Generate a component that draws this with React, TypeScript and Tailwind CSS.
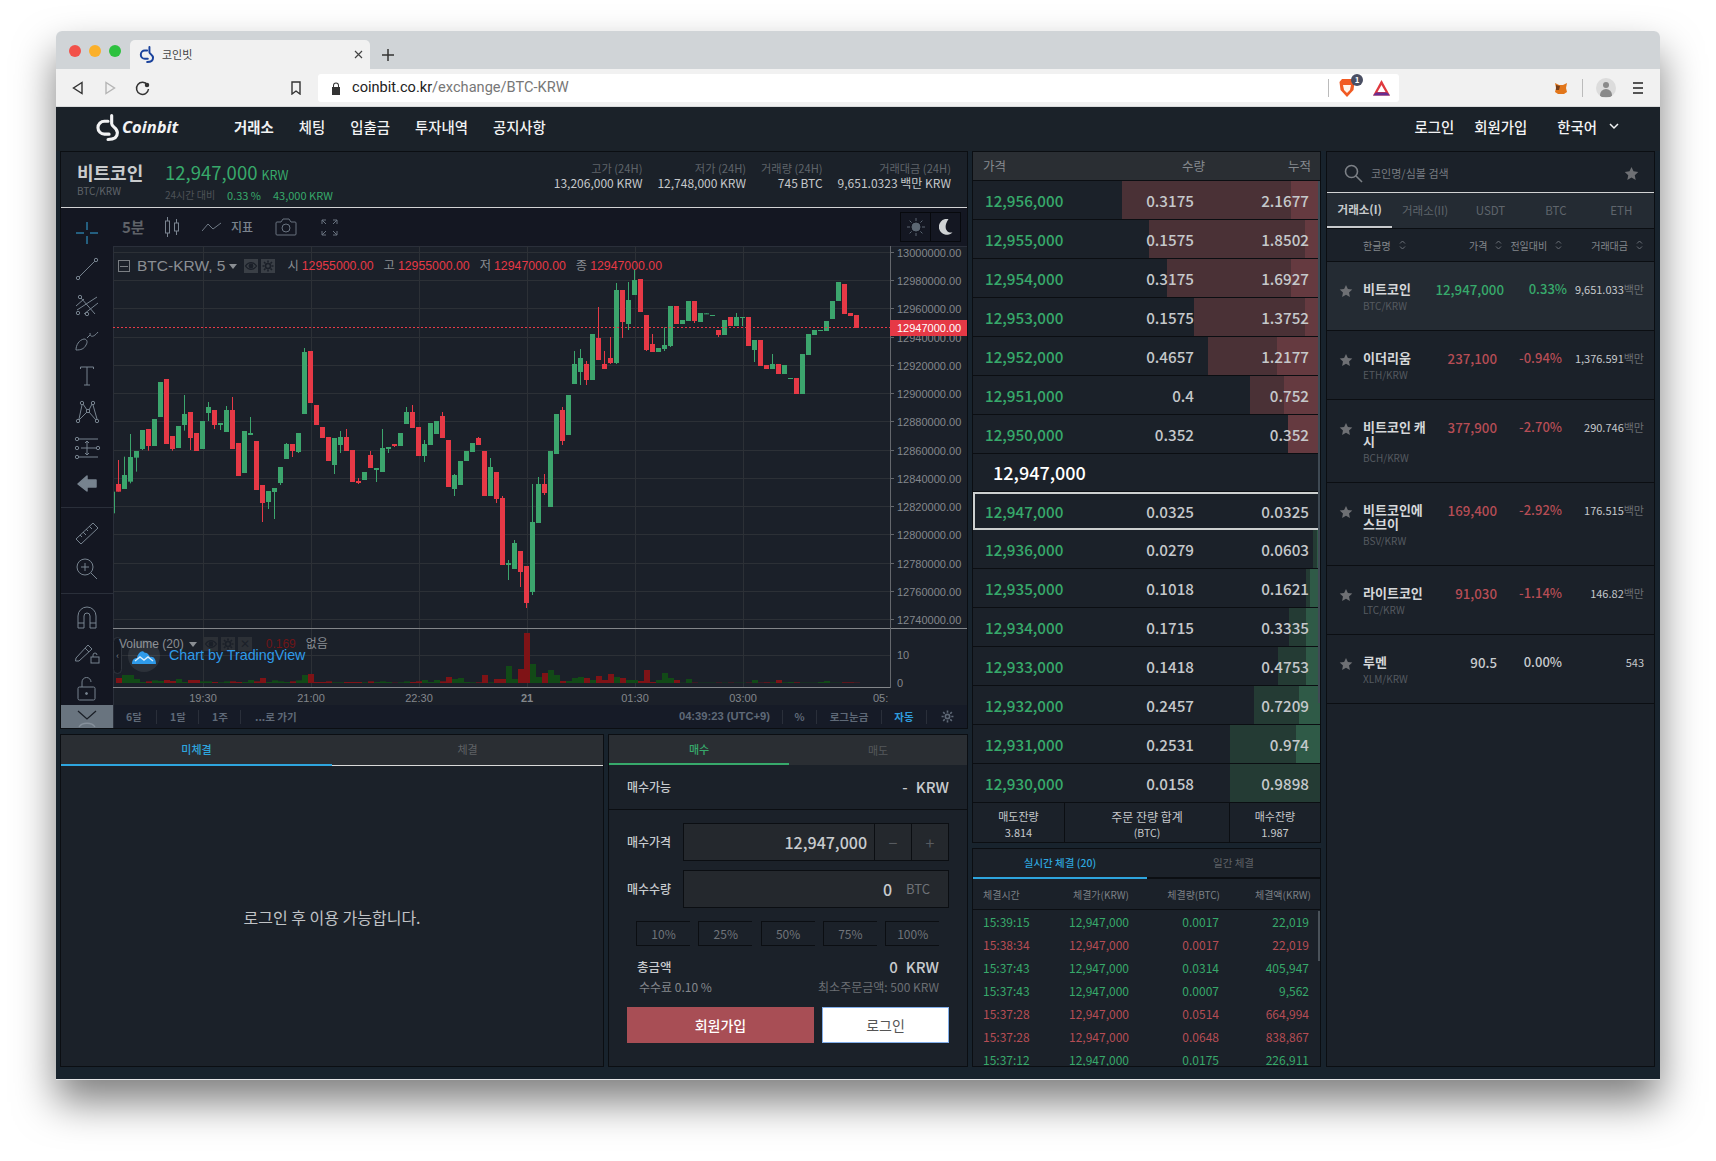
import React from 'react';

const GREEN = '#37a96b';
const RED = '#b64d55';

// [up, wickTop, bodyTop, bodyBottom, wickBottom] read off the chart, y in 3x pixels from y=220
const CANDLES: number[][] = [
  [0,720,792,815,815],[1,710,765,807,807],[1,642,711,785,790],[1,693,693,713,755],[1,630,630,687,690],[0,627,627,678,692],[1,597,597,678,678],[1,486,486,591,591],
  [0,477,477,672,672],[0,648,648,687,692],[1,618,618,684,684],[1,525,582,615,632],[0,576,576,654,690],[0,639,639,693,693],[1,603,603,687,687],[1,546,561,579,603],
  [0,570,570,615,627],[1,609,609,615,630],[1,558,570,636,636],[0,531,570,687,687],[0,669,669,768,768],[1,633,633,759,759],[1,591,639,645,645],[0,663,663,810,810],
  [0,795,795,849,906],[1,813,813,846,867],[1,804,804,816,897],[1,741,741,789,795],[1,669,672,717,717],[0,672,672,693,711],[1,639,639,696,699],[1,384,396,582,582],
  [0,393,393,549,549],[0,555,555,615,615],[0,621,621,654,654],[0,651,651,723,723],[1,654,654,735,762],[1,633,651,675,699],[0,627,651,693,693],[0,690,690,786,786],
  [0,774,783,789,792],[1,756,756,780,780],[0,693,705,744,744],[1,744,744,750,786],[1,627,684,756,756],[1,681,681,687,699],[0,672,672,678,681],[1,639,639,678,678],
  [1,561,576,612,612],[0,555,576,624,624],[0,621,621,708,708],[1,660,672,708,726],[1,609,609,675,675],[1,603,603,642,642],[0,576,588,654,654],[0,660,660,801,801],
  [1,762,765,807,828],[1,723,723,795,795],[1,693,693,723,723],[1,669,669,696,696],[0,651,654,675,675],[0,693,693,828,828],[1,714,741,828,828],[0,756,756,837,849],
  [0,828,834,1035,1035],[1,1020,1029,1035,1080],[1,960,969,1047,1047],[0,993,993,1056,1101],[0,1038,1038,1149,1164],[1,792,906,1116,1125],[1,771,792,909,909],[0,762,792,819,825],
  [1,693,693,861,861],[1,582,582,702,702],[0,561,570,663,675],[1,525,525,645,645],[1,393,432,492,492],[1,387,414,456,495],[0,423,432,480,495],[1,342,342,480,480],
  [0,261,354,420,420],[0,393,432,447,447],[0,351,414,429,432],[1,189,210,429,432],[0,210,210,306,354],[1,186,240,312,330],[1,150,180,225,225],[0,177,177,276,276],
  [0,285,285,390,393],[0,342,372,396,396],[1,384,384,396,396],[1,322,375,387,393],[1,258,258,378,381],[0,258,258,312,312],[1,300,300,312,312],[1,243,243,303,303],
  [0,243,243,303,309],[1,279,279,306,306],[1,280,280,282,282],[1,285,285,287,287],[0,330,330,345,351],[1,300,300,345,345],[0,291,291,318,318],[1,279,291,318,318],
  [1,291,291,293,318],[0,291,291,378,378],[1,360,360,390,426],[0,360,360,438,438],[0,435,435,447,447],[1,402,432,447,447],[0,432,432,462,462],[1,435,435,462,462],
  [1,474,474,476,476],[0,474,474,522,522],[1,402,402,522,522],[1,342,342,405,405],[1,330,330,345,345],[1,330,330,332,332],[1,303,303,333,333],[1,243,243,297,297],
  [1,186,186,243,243],[0,192,192,282,282],[0,279,279,288,288],[0,285,285,324,324],
];

const VOLUME = [
  1374,1365,1365,1377,1386,1384,1381,1383,1380,1383,1377,1386,1380,1380,1384,1384,1386,1387,1384,1384,1386,1386,1380,1384,1374,1386,1381,1384,1386,1384,1381,1365,
  1362,1386,1386,1384,1387,1387,1386,1386,1386,1387,1384,1386,1384,1386,1388,1387,1384,1386,1384,1380,1386,1380,1384,1371,1377,1374,1386,1387,1387,1365,1387,1377,
  1377,1338,1377,1347,1239,1332,1371,1359,1350,1365,1383,1383,1374,1371,1374,1380,1368,1380,1362,1371,1374,1380,1380,1383,1350,1386,1380,1359,1374,1380,1388,1377,
  1388,1388,1388,1388,1388,1388,1388,1388,1388,1388,1380,1388,1387,1387,1380,1387,1386,1387,1388,1388,1388,1386,1383,1388,1388,1387,1387,1388,
];

const GRID_Y = [252, 280, 308, 337, 365, 393, 421, 450, 478, 506, 534, 563, 591, 619];
const GRID_X = [203, 311, 419, 527, 635, 743];
const zy = (v: number) => 220 + v / 3;

const ASKS = [
  ['12,956,000', '0.3175', '2.1677', 198, 29],
  ['12,955,000', '0.1575', '1.8502', 171, 15],
  ['12,954,000', '0.3175', '1.6927', 153, 29],
  ['12,953,000', '0.1575', '1.3752', 126, 15],
  ['12,952,000', '0.4657', '1.2177', 112, 43],
  ['12,951,000', '0.4', '0.752', 70, 36],
  ['12,950,000', '0.352', '0.352', 32, 32],
] as const;

const BIDS = [
  ['12,936,000', '0.0279', '0.0603', 7, 3],
  ['12,935,000', '0.1018', '0.1621', 14, 10],
  ['12,934,000', '0.1715', '0.3335', 31, 14],
  ['12,933,000', '0.1418', '0.4753', 42, 14],
  ['12,932,000', '0.2457', '0.7209', 66, 21],
  ['12,931,000', '0.2531', '0.974', 90, 24],
  ['12,930,000', '0.0158', '0.9898', 90, 0],
] as const;

const TRADES = [
  ['15:39:15', '0.0017', '22,019', true],
  ['15:38:34', '0.0017', '22,019', false],
  ['15:37:43', '0.0314', '405,947', true],
  ['15:37:43', '0.0007', '9,562', true],
  ['15:37:28', '0.0514', '664,994', false],
  ['15:37:28', '0.0648', '838,867', false],
  ['15:37:12', '0.0175', '226,911', true],
] as const;

const COINS = [
  { name: '비트코인', sym: 'BTC/KRW', price: '12,947,000', pct: '0.33%', vol: '9,651.033', unit: '백만', color: GREEN, first: true },
  { name: '이더리움', sym: 'ETH/KRW', price: '237,100', pct: '-0.94%', vol: '1,376.591', unit: '백만', color: RED },
  { name: '비트코인 캐시', sym: 'BCH/KRW', price: '377,900', pct: '-2.70%', vol: '290.746', unit: '백만', color: RED },
  { name: '비트코인에스브이', sym: 'BSV/KRW', price: '169,400', pct: '-2.92%', vol: '176.515', unit: '백만', color: RED },
  { name: '라이트코인', sym: 'LTC/KRW', price: '91,030', pct: '-1.14%', vol: '146.82', unit: '백만', color: RED },
  { name: '루멘', sym: 'XLM/KRW', price: '90.5', pct: '0.00%', vol: '543', unit: '', color: '#c8cbce' },
];

const Logo = ({ color, className }: { color: string; className: string }) => (
  <svg viewBox="0 0 24 26" className={className} fill="none" stroke={color} strokeWidth="3" strokeLinecap="round">
    <path d="M13 7H9.500a6.200 6.200 0 0 0 0 12.400H14" />
    <path d="M16.500 1.500V9.500c0 3 5.500 3.600 5.500 8.500 0 4.400-3.800 6.500-9 6.500" />
  </svg>
);

const Star = ({ size = 14 }: { size?: number }) => (
  <svg width={size} height={size} viewBox="0 0 24 24" fill="#6e7074">
    <path d="M12 1.500l3.200 7 7.600.9-5.600 5.200 1.500 7.600L12 18.400l-6.700 3.800 1.500-7.600L1.200 9.400l7.600-.9z" />
  </svg>
);

const Sort = () => (
  <svg width="7" height="10" viewBox="0 0 7 10" fill="none" stroke="#6b7078" strokeWidth="1">
    <path d="M1 3.500L3.500 1 6 3.500M1 6.500L3.500 9 6 6.500" />
  </svg>
);

const Eye = () => (
  <svg width="14" height="14" viewBox="0 0 14 14" fill="none" stroke="#1b2029" strokeWidth="1.300">
    <path d="M1.500 7c3-4.500 8-4.500 11 0-3 4.500-8 4.500-11 0z" />
    <circle cx="7" cy="7" r="1.800" fill="#1b2029" />
  </svg>
);

const Gear = () => (
  <svg width="14" height="14" viewBox="0 0 14 14" fill="none" stroke="#1b2029" strokeWidth="1.600">
    <circle cx="7" cy="7" r="2.500" />
    <path d="M7 1.500v2M7 10.500v2M1.500 7h2M10.500 7h2M3 3l1.500 1.500M9.500 9.500L11 11M3 11l1.500-1.500M9.500 4.500L11 3" />
  </svg>
);

const Caret = () => (
  <svg width="8" height="5" viewBox="0 0 8 5" fill="#8a8e93"><path d="M0 0h8L4 5z" /></svg>
);

// left drawing tools of the chart, all on a 28x28 box
const TOOLS: React.ReactNode[] = [
  <g><circle cx="5" cy="23" r="1.700" /><circle cx="23" cy="5" r="1.700" /><path d="M6.200 21.800L21.800 6.200" /></g>,
  <g><path d="M4 20L24 7M11 24L25 13M8 8l14 16M3 16l8-7" /><circle cx="5" cy="23" r="1.700" /><circle cx="14" cy="24" r="1.700" /><circle cx="7" cy="7" r="1.700" /></g>,
  <g><path d="M3 24c0-5 3-10 8-11 3 0 4 3 2 6-2 4-5 5-10 5zM14 12l3-3M17 7c0 5 4 4 8-1" /></g>,
  <g><path d="M7.500 5h13M7.500 5v2M20.500 5v2M14 5v18M11 23h6" /></g>,
  <g><circle cx="5" cy="23" r="1.700" /><circle cx="9" cy="5" r="1.700" /><circle cx="20" cy="5" r="1.700" /><circle cx="24" cy="23" r="1.700" /><circle cx="15" cy="13" r="1.700" /><path d="M6 21L9 7M10 6l4 6M16 12l3-6M20 7l4 14M6 22l8-8M16 14l7 8" /></g>,
  <g><path d="M6 5h19M8 14h15M6 23h19M14 7v14M12 9l2-2 2 2M12 19l2 2 2-2" /><circle cx="4" cy="5" r="1.700" /><circle cx="4" cy="14" r="1.700" /><circle cx="25" cy="14" r="1.700" /><circle cx="4" cy="23" r="1.700" /></g>,
  <path d="M5 15l9-8v4h9v7h-9v4z" fill="#77838f" stroke="#77838f" strokeWidth="1.500" strokeLinejoin="round" />,
];

const TOOLS2: React.ReactNode[] = [
  <g><path d="M3 20L20 4l5 5L8 25zM7 16l2 2M10 13l3 3M13 10l2 2M16 7l3 3" /></g>,
  <g><circle cx="12" cy="12" r="8" /><path d="M18 18l6 6M12 8v8M8 12h8" /></g>,
];

const TOOLS3: React.ReactNode[] = [
  <g><path d="M5 24V12a9 9 0 0 1 18 0v12h-6V12a3 3 0 0 0-6 0v12zM5 19h6M17 19h6" /></g>,
  <g><path d="M3 19L15 6l4 4L6 22l-3.500 0zM12 9l4 4" /><rect x="18" y="18" width="8" height="6" /><path d="M20 18v-2a2 2 0 0 1 4 0" /></g>,
  <g><rect x="5" y="13" width="17" height="13" rx="1.500" /><path d="M9 13V8a4.500 4.500 0 0 1 9 0" /><circle cx="13.500" cy="19.500" r="1" fill="#77838f" /></g>,
];

const Tool = ({ children, h = 'h-[36px]' }: { children: React.ReactNode; h?: string }) => (
  <div className={`${h} flex items-center justify-center`}>
    <svg width="28" height="28" viewBox="0 0 28 28" fill="none" stroke="#77838f" strokeWidth="1">
      {children}
    </svg>
  </div>
);

const LeftToolbar = () => (
  <div className="flex w-[52px] shrink-0 flex-col bg-[#141722] pt-[7px]">
    <div className="flex h-[36px] items-center justify-center">
      <svg width="24" height="24" viewBox="0 0 24 24" fill="none" strokeWidth="1" stroke="#35a7dc">
        <path d="M1 12h8M15 12h8M12 1v8M12 15v8" />
      </svg>
    </div>
    {TOOLS.map((t, i) => <Tool key={i}>{t}</Tool>)}
    <div className="my-[6px] h-px bg-[#2a2f3a]" />
    {TOOLS2.map((t, i) => <Tool key={i} h={i === 0 ? 'h-[37px]' : 'h-[36px]'}>{t}</Tool>)}
    <div className="my-[6px] h-px bg-[#2a2f3a]" />
    {TOOLS3.map((t, i) => <Tool key={i} h={i === 2 ? 'h-[34px]' : 'h-[36px]'}>{t}</Tool>)}
    <div className="mt-auto flex h-[23px] items-center justify-center overflow-hidden bg-[#69747f]">
      <svg width="24" height="24" viewBox="0 0 24 24" fill="none" stroke="#1a1f27" strokeWidth="1.300">
        <path d="M3 6l9 8 9-8" />
        <path d="M4 22c3-5 13-5 16 0" stroke="#86909b" />
      </svg>
    </div>
  </div>
);

const TopToolbar = () => (
  <div className="flex h-[38px] shrink-0 items-center bg-[#141722] pl-[9px] pr-[6px]">
    <span className="w-[42px] text-[15px] font-bold text-[#5f6268]">5분</span>
    <svg width="16" height="20" viewBox="0 0 16 20" fill="none" stroke="#7a8490" strokeWidth="1">
      <rect x="1.500" y="4" width="4" height="12" />
      <path d="M3.500 0v4M3.500 16v4M12.500 2v4M12.500 14v4" />
      <rect x="10.500" y="6" width="4" height="8" />
    </svg>
    <svg width="20" height="10" viewBox="0 0 20 10" fill="none" stroke="#6f7985" strokeWidth="1" className="ml-[22px]">
      <path d="M0 9l6-7 5 5 8-6" />
    </svg>
    <span className="ml-[9px] text-[12px] font-medium text-[#7a838d]">지표</span>
    <svg width="22" height="18" viewBox="0 0 22 18" fill="none" stroke="#68727f" strokeWidth="1" className="ml-[22px]">
      <path d="M2 4h4l2-3h6l2 3h4a1 1 0 0 1 1 1v11a1 1 0 0 1-1 1H2a1 1 0 0 1-1-1V5a1 1 0 0 1 1-1z" />
      <circle cx="11" cy="10" r="4" />
    </svg>
    <svg width="17" height="17" viewBox="0 0 17 17" fill="none" stroke="#68727f" strokeWidth="1" className="ml-[24px]">
      <path d="M1 5V1h4M1 1l4 4M16 5V1h-4M16 1l-4 4M1 12v4h4M1 16l4-4M16 12v4h-4M16 16l-4-4" />
    </svg>
    <div className="ml-auto flex h-[30px] border border-[#07090d]">
      <div className="flex w-[30px] items-center justify-center border-r border-[#07090d]">
        <svg width="18" height="18" viewBox="0 0 18 18" stroke="#5c6773" strokeWidth="1" fill="#5c6773">
          <circle cx="9" cy="9" r="4" />
          <path d="M9 0v3M9 15v3M0 9h3M15 9h3M2.600 2.600l2 2M13.400 13.400l2 2M2.600 15.400l2-2M13.400 4.600l2-2" />
        </svg>
      </div>
      <div className="flex w-[29px] items-center justify-center">
        <svg width="14" height="16" viewBox="0 0 14 16" fill="#cfd2d4">
          <path d="M9.500 0a8 8 0 1 0 4 13.500C7 14.500 4 8 9.500 0z" />
        </svg>
      </div>
    </div>
  </div>
);

const ChartCanvas = () => (
  <div className="relative h-[459px] shrink-0 bg-[#1b2029]">
    <svg viewBox="113 246 854 459" width="854" height="459" className="absolute left-0 top-0 font-['Liberation_Sans','Noto_Sans_CJK_KR',sans-serif]">
      <line x1="113" x2="967" y1="246.500" y2="246.500" stroke="#2a2f3a" />
      <line x1="113.500" x2="113.500" y1="246" y2="705" stroke="#2a2f3a" />
      {GRID_Y.map((y) => <line key={y} x1="113" x2="890" y1={y + 0.5} y2={y + 0.5} stroke="#2c3036" />)}
      <line x1="113" x2="890" y1="655.500" y2="655.500" stroke="#2c3036" />
      {GRID_X.map((x) => <line key={x} x1={x + 0.5} x2={x + 0.5} y1="246" y2="687" stroke="#2c3036" />)}
      {VOLUME.map((v, i) => (
        <rect key={i} x={116 + 6 * i} y={zy(v)} width="6" height={683 - zy(v)} fill={CANDLES[i][0] ? '#124a17' : '#7f1316'} />
      ))}
      <line x1="114.500" x2="114.500" y1={zy(815)} y2={zy(880)} stroke="#3ca56d" />
      {CANDLES.map(([up, wt, bt, bb, wb], i) => {
        const cx = 118.5 + 6 * i;
        const color = up ? '#3ca56d' : '#e63946';
        return (
          <g key={i}>
            <line x1={cx} x2={cx} y1={zy(wt)} y2={zy(wb)} stroke={color} />
            <rect x={cx - 2.5} y={zy(bt)} width="5" height={Math.max(1, (bb - bt) / 3)} fill={color} />
          </g>
        );
      })}
      <line x1="113" x2="890" y1="327.500" y2="327.500" stroke="#e63946" strokeDasharray="2 2" />
      <line x1="113" x2="967" y1="628.500" y2="628.500" stroke="#83868a" />
      <line x1="113" x2="890" y1="687.500" y2="687.500" stroke="#83868a" />
      <line x1="890.500" x2="890.500" y1="246" y2="688" stroke="#64676c" />
      {GRID_Y.map((y, i) => (
        <g key={y}>
          <line x1="890" x2="894" y1={y + 0.5} y2={y + 0.5} stroke="#64676c" />
          <text x="897" y={y + 4.5} fontSize="11" fill="#83878c">{13000000 - 20000 * i}.00</text>
        </g>
      ))}
      <rect x="890" y="320" width="77" height="16" fill="#e63946" />
      <text x="897" y="332" fontSize="11" fill="#ffffff">12947000.00</text>
      <text x="897" y="659" fontSize="11" fill="#83878c">10</text>
      <text x="897" y="687" fontSize="11" fill="#83878c">0</text>
      {[['19:30', 203], ['21:00', 311], ['22:30', 419], ['21', 527], ['01:30', 635], ['03:00', 743]].map(([t, x]) => (
        <text key={t} x={x} y="702" fontSize="11" textAnchor="middle" fill="#83878c" fontWeight={t === '21' ? 700 : 400}>{t}</text>
      ))}
      <text x="873" y="702" fontSize="11" fill="#83878c">05:</text>
    </svg>
    <div className="absolute left-[5px] top-[11px] flex items-center font-['Liberation_Sans','Noto_Sans_CJK_KR',sans-serif] text-[12.300px] leading-[18px] text-[#8a8e93]">
      <span className="flex h-[12px] w-[12px] items-center justify-center border border-[#7a7e83]"><span className="h-px w-[8px] bg-[#7a7e83]" /></span>
      <span className="ml-[7px] text-[15.500px]">BTC-KRW, 5</span>
      <span className="ml-[4px]"><Caret /></span>
      <span className="ml-[7px] bg-[#3a3f46]"><Eye /></span>
      <span className="ml-[3px] bg-[#3a3f46]"><Gear /></span>
      <span className="ml-[12px]">시</span>
      <span className="ml-[3px] text-[#e63946]">12955000.00</span>
      <span className="ml-[10px]">고</span>
      <span className="ml-[3px] text-[#e63946]">12955000.00</span>
      <span className="ml-[10px]">저</span>
      <span className="ml-[3px] text-[#e63946]">12947000.00</span>
      <span className="ml-[10px]">종</span>
      <span className="ml-[3px] text-[#e63946]">12947000.00</span>
    </div>
    <div className="absolute left-0 top-[391px] flex h-[37px] w-[9px] items-center justify-center rounded-[5px] border border-[#30353e] bg-[#151922] text-[9px] text-[#7e848c]">‹</div>
    <div className="absolute left-[6px] top-[389px] flex items-center font-['Liberation_Sans','Noto_Sans_CJK_KR',sans-serif] text-[12px] leading-[18px] text-[#8a8e93]">
      <span>Volume (20)</span>
      <span className="ml-[5px]"><Caret /></span>
      <span className="ml-[7px] bg-[#2c3036]"><Eye /></span>
      <span className="ml-[3px] bg-[#2c3036]"><Gear /></span>
      <span className="ml-[3px] flex h-[14px] w-[14px] items-center justify-center bg-[#2c3036] text-[12px] text-[#1b2029]">✕</span>
      <span className="ml-[14px] text-[#6f1518]">0.169</span>
      <span className="ml-[10px]">없음</span>
    </div>
    <div className="absolute left-[15px] top-[394px] flex items-center">
      <span className="flex h-[32px] w-[32px] items-center justify-center rounded-full bg-[#ffffff14]">
        <svg width="24" height="15" viewBox="0 0 24 15" fill="#2f9bea">
          <path d="M0 15c0-4 2-6 5-6 1-5 5-9 8-5 2-1 4 2 5 4 4-1 6 3 6 7z" />
          <path d="M3 12l5-4 4 3 4-3 5 4" fill="none" stroke="#d8ecfb" strokeWidth="1.400" />
        </svg>
      </span>
      <span className="ml-[9px] font-['Liberation_Sans',sans-serif] text-[14.300px] text-[#2f9bea]">Chart by TradingView</span>
    </div>
  </div>
);

const ChartFooter = () => (
  <div className="flex h-[23px] items-center border-l border-[#2a2f3a] bg-[#161b27] font-['Noto_Sans_CJK_KR',sans-serif] text-[10.500px] font-bold text-[#5f6977]">
    <span className="w-[42px] pl-[12px]">6달</span>
    <span className="h-[14px] w-px bg-[#2a2f3a]" />
    <span className="w-[41px] pl-[13px]">1달</span>
    <span className="h-[14px] w-px bg-[#2a2f3a]" />
    <span className="w-[41px] pl-[13px]">1주</span>
    <span className="h-[14px] w-px bg-[#2a2f3a]" />
    <span className="pl-[14px]">...로 가기</span>
    <span className="ml-auto font-['Liberation_Sans',sans-serif] text-[11.200px]">04:39:23 (UTC+9)</span>
    <span className="ml-[12px] h-[14px] w-px bg-[#2a2f3a]" />
    <span className="w-[33px] text-center">%</span>
    <span className="h-[14px] w-px bg-[#2a2f3a]" />
    <span className="w-[64px] text-center">로그눈금</span>
    <span className="h-[14px] w-px bg-[#2a2f3a]" />
    <span className="w-[44px] text-center text-[#2f9bdc]">자동</span>
    <span className="h-[14px] w-px bg-[#2a2f3a]" />
    <span className="flex w-[40px] justify-center">
      <svg width="13" height="13" viewBox="0 0 24 24" fill="none" stroke="#5f6977" strokeWidth="3">
        <circle cx="12" cy="12" r="4" />
        <path d="M12 1v4M12 19v4M1 12h4M19 12h4M4 4l3 3M17 17l3 3M4 20l3-3M17 7l3-3" />
      </svg>
    </span>
  </div>
);

const ChartPanel = () => (
  <section className="flex h-[578px] flex-col border border-[#0b0e12] bg-[#1b2129]">
    <header className="flex h-[56px] shrink-0 border-b border-[#d2d3d4] pl-[16px] pr-[16px]">
      <div className="w-[88px] pt-[8px]">
        <div className="text-[18px] font-bold leading-[24px] text-[#c9cbcd]">비트코인</div>
        <div className="text-[10px] leading-[14px] text-[#5f646a]">BTC/KRW</div>
      </div>
      <div className="pt-[7px]">
        <div className="flex items-baseline leading-[26px]">
          <span className="text-[18.500px] text-[#37a96b]">12,947,000</span>
          <span className="ml-[4px] text-[12.500px] text-[#37a96b]">KRW</span>
        </div>
        <div className="flex text-[11px] leading-[14px]">
          <span className="w-[62px] text-[10px] text-[#4e5358]">24시간 대비</span>
          <span className="w-[46px] text-[#37a96b]">0.33 %</span>
          <span className="text-[#37a96b]">43,000 KRW</span>
        </div>
      </div>
      <div className="ml-auto flex gap-[15px] pt-[9px] text-right">
        {[['고가 (24H)', '13,206,000 KRW'], ['저가 (24H)', '12,748,000 KRW'], ['거래량 (24H)', '745 BTC'], ['거래대금 (24H)', '9,651.0323 백만 KRW']].map(([k, v]) => (
          <div key={k}>
            <div className="text-[11.200px] leading-[14px] text-[#5f646a]">{k}</div>
            <div className="text-[12px] leading-[16px] text-[#c5c8cb]">{v}</div>
          </div>
        ))}
      </div>
    </header>
    <div className="flex min-h-0 flex-1">
      <LeftToolbar />
      <div className="flex min-w-0 flex-1 flex-col">
        <TopToolbar />
        <ChartCanvas />
        <ChartFooter />
      </div>
    </div>
  </section>
);

const OpenOrders = () => (
  <section className="flex w-[544px] flex-col border border-[#0b0e12] bg-[#1b2129]">
    <div className="flex h-[31px] bg-[#2a2e33] text-[11px] font-medium">
      <div className="flex flex-1 items-center justify-center border-b-2 border-[#2ea5de] text-[#2ea5de]">미체결</div>
      <div className="flex flex-1 items-center justify-center border-b border-[#d9d9d9] pb-[1px] font-normal text-[#5f6266]">체결</div>
    </div>
    <div className="flex flex-1 items-center justify-center pt-[1px] text-[16px] text-[#c0c3c6]">로그인 후 이용 가능합니다.</div>
  </section>
);

const OrderForm = () => (
  <section className="w-[360px] border border-[#0b0e12] bg-[#1b2129] text-[#c8cbce]">
    <div className="flex h-[30px] bg-[#2a2e33] text-[11px]">
      <div className="flex w-[180px] items-center justify-center border-b-2 border-[#37a96b] font-medium text-[#37a96b]">매수</div>
      <div className="flex flex-1 items-center justify-center text-[#55585c]">매도</div>
    </div>
    <div className="flex h-[45px] items-center justify-between border-b border-[#0b0e12] px-[18px]">
      <span className="text-[12px] font-medium">매수가능</span>
      <span className="text-[15px] font-medium">-<span className="ml-[8px]">KRW</span></span>
    </div>
    <div className="mt-[13px] flex items-center pl-[18px]">
      <span className="w-[56px] text-[12px] font-medium">매수가격</span>
      <div className="flex h-[38px] w-[266px] items-center border border-[#0b0e12] bg-[#24282d]">
        <span className="flex-1 pr-[7px] text-right text-[16px] font-medium">12,947,000</span>
        <span className="flex h-full w-[37px] items-center justify-center border-l border-[#0b0e12] text-[#575b60]">−</span>
        <span className="flex h-full w-[37px] items-center justify-center border-l border-[#0b0e12] text-[#575b60]">+</span>
      </div>
    </div>
    <div className="mt-[9px] flex items-center pl-[18px]">
      <span className="w-[56px] text-[12px] font-medium">매수수량</span>
      <div className="flex h-[38px] w-[266px] items-center justify-end border border-[#0b0e12] bg-[#24282d] pr-[18px]">
        <span className="text-[16px] font-medium">0</span>
        <span className="ml-[14px] text-[13px] text-[#6e7277]">BTC</span>
      </div>
    </div>
    <div className="mt-[13px] flex gap-[8.300px] pl-[27px] text-[12px] text-[#70747a]">
      {['10%', '25%', '50%', '75%', '100%'].map((p) => (
        <span key={p} className="flex h-[25px] w-[54px] items-center justify-center border-y border-l border-[#0b0e12]">{p}</span>
      ))}
    </div>
    <div className="mt-[12px] flex items-center justify-between pl-[28px] pr-[28px] leading-[18px]">
      <span className="text-[12.500px] font-medium">총금액</span>
      <span className="text-[15px] font-medium">0<span className="ml-[8px]">KRW</span></span>
    </div>
    <div className="mt-[3px] flex items-center justify-between pl-[30px] pr-[28px] text-[12px] leading-[16px] text-[#6b6f74]">
      <span className="text-[#83878c]">수수료 0.10 %</span>
      <span>최소주문금액: 500 KRW</span>
    </div>
    <div className="mt-[12px] flex gap-[8px] pl-[18px] text-[14px]">
      <button className="h-[36px] w-[187px] bg-[#a84e55] font-medium text-white">회원가입</button>
      <button className="h-[36px] w-[127px] border border-[#82aee9] bg-white text-[#555]">로그인</button>
    </div>
  </section>
);

const BookRow = ({ row, kind }: { row: readonly [string, string, string, number, number]; kind: 'ask' | 'bid' }) => (
  <div className="relative flex h-[39px] items-center border-b border-[#0b0e12] pl-[12px] pr-[11px] text-[15.200px] font-medium">
    <div className={`absolute bottom-0 right-0 top-0 ${kind === 'ask' ? 'bg-[#4a3136]' : 'bg-[#243b34]'}`} style={{ width: row[3] }} />
    <div className={`absolute bottom-0 right-0 top-0 ${kind === 'ask' ? 'bg-[#653a40]' : 'bg-[#2f5a47]'}`} style={{ width: row[4] }} />
    <span className="relative flex-1 text-[#37a96b]">{row[0]}</span>
    <span className="relative w-[70px] text-right text-[#c5c8cb]">{row[1]}</span>
    <span className="relative w-[115px] text-right text-[#c5c8cb]">{row[2]}</span>
  </div>
);

const OrderBook = () => (
  <section className="relative h-[692px] border border-[#0b0e12] bg-[#1b2129]">
    <div className="flex h-[29px] items-center justify-between border-b border-[#0b0e12] bg-[#2a2e33] pl-[10px] pr-[9px] pt-[1px] text-[12.500px] text-[#85898e]">
      <span className="flex-1">가격</span>
      <span className="mr-[83px]">수량</span>
      <span>누적</span>
    </div>
    {ASKS.map((r) => <BookRow key={r[0]} row={r} kind="ask" />)}
    <div className="flex h-[38px] items-center border-b border-[#0b0e12] pl-[20px] text-[18px] font-medium text-white">12,947,000</div>
    <div className="flex h-[38px] items-center border-2 border-[#cdd0d0] pl-[10px] pr-[9px] text-[15.200px] font-medium">
      <span className="flex-1 text-[#37a96b]">12,947,000</span>
      <span className="w-[70px] text-right text-[#c5c8cb]">0.0325</span>
      <span className="w-[115px] text-right text-[#c5c8cb]">0.0325</span>
    </div>
    {BIDS.map((r) => <BookRow key={r[0]} row={r} kind="bid" />)}
    <div className="absolute right-0 top-[29px] h-[522px] w-[2px] bg-[#3f4a54]" />
    <div className="flex h-[39px] text-center text-[11px] leading-[16px] text-[#c5c8cb]">
      <div className="w-[92px] border-r border-[#0b0e12] pt-[5px]"><div>매도잔량</div><div>3.814</div></div>
      <div className="flex-1 border-r border-[#0b0e12] pt-[6px] text-[12px]"><div>주문 잔량 합계</div><div className="text-[10.500px]">(BTC)</div></div>
      <div className="w-[90px] pt-[5px]"><div>매수잔량</div><div>1.987</div></div>
    </div>
  </section>
);

const TradeTape = () => (
  <section className="relative h-[219px] overflow-hidden border border-[#0b0e12] bg-[#1b2129]">
    <div className="flex h-[30px] text-[10.500px]">
      <div className="flex w-[174px] items-center justify-center border-b-2 border-[#2ea5de] font-medium text-[#2ea5de]">실시간 체결 (20)</div>
      <div className="flex flex-1 items-center justify-center border-b-2 border-[#0b0e12] text-[#5f6266]">일간 체결</div>
    </div>
    <div className="flex h-[31px] items-center border-b border-[#0b0e12] pl-[10px] pr-[9px] text-[10px] text-[#7c8086]">
      <span className="w-[61px]">체결시간</span>
      <span className="w-[85px] text-right">체결가(KRW)</span>
      <span className="w-[91px] text-right">체결량(BTC)</span>
      <span className="flex-1 text-right">체결액(KRW)</span>
    </div>
    <div className="pl-[10px] pr-[11px] text-[12px]">
      {TRADES.map(([t, q, a, up], i) => (
        <div key={i} className="flex h-[23px] items-center" style={{ color: up ? GREEN : RED }}>
          <span className="w-[61px]">{t}</span>
          <span className="w-[85px] text-right">12,947,000</span>
          <span className="w-[90px] text-right">{q}</span>
          <span className="flex-1 text-right">{a}</span>
        </div>
      ))}
    </div>
    <div className="absolute right-0 top-[62px] h-[50px] w-[2px] bg-[#4a525a]" />
  </section>
);

const CoinList = () => (
  <section className="h-[916px] w-[329px] border border-[#0b0e12] bg-[#1b2129]">
    <div className="flex h-[41px] items-center border-b border-[#d2d3d4] pl-[17px] pr-[15px] pt-[2px]">
      <svg width="19" height="19" viewBox="0 0 19 19" fill="none" stroke="#7c8086" strokeWidth="1.600">
        <circle cx="7.500" cy="7.500" r="6" />
        <path d="M12 12l6 6" />
      </svg>
      <span className="ml-[8px] flex-1 text-[11px] text-[#787c81]">코인명/심볼 검색</span>
      <Star size={15} />
    </div>
    <div className="flex h-[36px] border-b border-[#0b0e12] bg-[#242b33] text-[11.500px] text-[#5f656c]">
      <div className="flex w-[66px] items-center justify-center border-b-2 border-[#c9cbcd] font-bold text-[#c9cbcd]">거래소(I)</div>
      <div className="flex w-[66px] items-center justify-center">거래소(II)</div>
      <div className="flex w-[66px] items-center justify-center">USDT</div>
      <div className="flex w-[66px] items-center justify-center">BTC</div>
      <div className="flex w-[66px] items-center justify-center">ETH</div>
    </div>
    <div className="flex h-[33px] items-center border-b border-[#0b0e12] text-[10px] text-[#83878c]">
      <span className="ml-[36px]">한글명</span>
      <span className="ml-[8px]"><Sort /></span>
      <span className="ml-auto">가격</span>
      <span className="ml-[8px]"><Sort /></span>
      <span className="ml-[8px]">전일대비</span>
      <span className="ml-[8px]"><Sort /></span>
      <span className="ml-[29px]">거래대금</span>
      <span className="ml-[8px] mr-[11px]"><Sort /></span>
    </div>
    {COINS.map((c) => (
      <div key={c.sym} className={`flex border-b border-[#0b0e12] pb-[17px] pt-[20px] ${c.first ? 'bg-[#242b33]' : ''}`}>
        <span className="flex h-[16px] w-[35px] shrink-0 items-end justify-center pl-[2px]"><Star /></span>
        <div className="ml-[1px] w-[64px] shrink-0">
          <div className="text-[13px] font-bold leading-[14px] text-[#d5d7d9]">{c.name}</div>
          <div className="mt-[3px] text-[10px] leading-[14px] text-[#555a60]">{c.sym}</div>
        </div>
        <span className={`${c.first ? 'w-[77px]' : 'w-[70px]'} shrink-0 whitespace-nowrap text-right text-[13.300px] font-medium leading-[16px]`} style={{ color: c.color }}>{c.price}</span>
        <span className={`${c.first ? 'w-[63px]' : 'w-[65px]'} shrink-0 whitespace-nowrap text-right text-[13px] font-medium leading-[14px]`} style={{ color: c.color }}>{c.pct}</span>
        <span className="flex-1 whitespace-nowrap pr-[10px] text-right text-[11px] leading-[14px] text-[#c5c8cb]">
          {c.vol}<span className="text-[#6b6f74]">{c.unit}</span>
        </span>
      </div>
    ))}
  </section>
);

const BrowserChrome = () => (
  <>
    <div className="flex h-[38px] items-end rounded-t-[6px] bg-[#d0d4d7] font-['Liberation_Sans','Noto_Sans_CJK_KR',sans-serif]">
      <div className="mb-[12px] ml-[13px] flex w-[61px] gap-[8px]">
        <span className="h-[12px] w-[12px] rounded-full bg-[#f2514a]" />
        <span className="h-[12px] w-[12px] rounded-full bg-[#fbb02a]" />
        <span className="h-[12px] w-[12px] rounded-full bg-[#2dc13f]" />
      </div>
      <div className="flex h-[29px] w-[240px] items-center rounded-t-[5px] bg-[#f1f1f1] pl-[8px] pr-[7px]">
        <Logo color="#1a429c" className="h-[17px] w-[17px]" />
        <span className="ml-[7px] flex-1 font-['Noto_Sans_CJK_KR',sans-serif] text-[11px] text-[#444]">코인빗</span>
        <svg width="9" height="9" viewBox="0 0 9 9" stroke="#444" strokeWidth="1.200"><path d="M1 1l7 7M8 1L1 8" /></svg>
      </div>
      <svg width="14" height="14" viewBox="0 0 14 14" stroke="#333" strokeWidth="1.500" className="mb-[7px] ml-[11px]"><path d="M7 1v12M1 7h12" /></svg>
    </div>
    <div className="flex h-[38px] items-center border-b border-[#d9dbdc] bg-[#f1f1f1] pt-[1px]">
      <svg width="12" height="14" viewBox="0 0 12 14" fill="none" stroke="#333" strokeWidth="1.400" className="ml-[16px]"><path d="M10 1.500v11L1.500 7z" /></svg>
      <svg width="12" height="14" viewBox="0 0 12 14" fill="none" stroke="#b5b5b5" strokeWidth="1.400" className="ml-[20px]"><path d="M2 1.500v11L10.500 7z" /></svg>
      <svg width="15" height="15" viewBox="0 0 15 15" fill="none" stroke="#333" strokeWidth="1.500" className="ml-[19px]"><path d="M12.500 4A6 6 0 1 0 13.500 8" /><circle cx="12" cy="4" r="1.500" fill="#333" /></svg>
      <svg width="10" height="14" viewBox="0 0 10 14" fill="none" stroke="#333" strokeWidth="1.400" className="ml-[141px]"><path d="M1 1h8v12L5 10l-4 3z" /></svg>
      <div className="ml-[17px] flex h-[28px] w-[1081px] items-center rounded-[3px] bg-white pr-[8px]">
        <svg width="10" height="13" viewBox="0 0 10 13" className="ml-[13px]" fill="#333"><path d="M2 5V3.500a3 3 0 0 1 6 0V5h1v8H1V5zm1 0h4V3.500a2 2 0 0 0-4 0z" /></svg>
        <span className="ml-[11px] flex-1 font-['Roboto',sans-serif] text-[14.600px] text-[#777]"><span className="text-[#222]">coinbit.co.kr</span>/exchange/BTC-KRW</span>
        <span className="h-[18px] w-px bg-[#bbb]" />
        <span className="relative ml-[10px] flex h-[20px] w-[24px]">
          <svg width="16" height="20" viewBox="0 0 16 20" fill="#f15a22"><path d="M3 1h10l2.500 3-1 8L8 19 1.500 12l-1-8z" /><path d="M4 7h8l-1 5-3 3-3-3z" fill="#fff3ea" /></svg>
          <span className="absolute left-[12px] top-[-4px] flex h-[12px] w-[12px] items-center justify-center rounded-full bg-[#4a4f63] text-[8px] font-bold text-white">1</span>
        </span>
        <svg width="19" height="18" viewBox="0 0 19 18" className="ml-[9px]"><path d="M9.500 1L18 16.500H1z" fill="#e0393f" /><path d="M1 16.500h17l-3-3H4z" fill="#662d91" /><path d="M9.500 6L5.500 13h8z" fill="#fff" /></svg>
      </div>
      <svg width="14" height="14" viewBox="0 0 14 14" className="ml-[155px]"><path d="M1 2l4 2h4l4-2-1 5 1 4-3 2H4l-3-2 1-4z" fill="#e2761b" /><path d="M2 4l4 1-1 4H2z" fill="#763e1a" /></svg>
      <span className="ml-[14px] h-[18px] w-px bg-[#bbb]" />
      <span className="ml-[13px] flex h-[20px] w-[20px] flex-col items-center overflow-hidden rounded-full bg-[#dcdcdc] pt-[4px]">
        <span className="h-[6px] w-[6px] rounded-full bg-[#8a8a8a]" />
        <span className="mt-[1px] h-[8px] w-[12px] rounded-t-full bg-[#8a8a8a]" />
      </span>
      <span className="ml-[17px] flex flex-col gap-[3px]">
        <span className="h-[2px] w-[10px] bg-[#555]" />
        <span className="h-[2px] w-[10px] bg-[#555]" />
        <span className="h-[2px] w-[10px] bg-[#555]" />
      </span>
    </div>
  </>
);

const TopNav = () => (
  <nav className="flex h-[44px] items-center bg-[#1b2229] pb-[4px] pl-[38px] pr-[41px] text-[14.400px] font-medium text-[#f2f3f4]">
    <Logo color="#f2f3f4" className="h-[27px] w-[26px]" />
    <span className="ml-[2px] w-[112px] font-['Noto_Sans',sans-serif] text-[16.500px] font-bold italic">Coinbit</span>
    <div className="flex gap-[25px]">
      <span className="font-bold">거래소</span>
      <span>체팅</span>
      <span>입출금</span>
      <span>투자내역</span>
      <span>공지사항</span>
    </div>
    <div className="ml-auto flex items-center">
      <span>로그인</span>
      <span className="ml-[20px]">회원가입</span>
      <span className="ml-[30px]">한국어</span>
      <svg width="10" height="7" viewBox="0 0 10 7" fill="none" stroke="#f2f3f4" strokeWidth="1.500" className="ml-[12px]"><path d="M1 1l4 4 4-4" /></svg>
    </div>
  </nav>
);

export default function App() {
  return (
    <div className="h-[1161px] w-full overflow-hidden bg-white pt-[31px] font-['Noto_Sans_CJK_KR','Noto_Sans',sans-serif]">
      <div className="ml-[56px] w-[1604px] rounded-t-[6px] border-b border-[#e4e6e8] shadow-[0_22px_40px_rgba(0,0,0,0.5)]">
        <BrowserChrome />
        <TopNav />
        <main className="flex h-[928px] gap-[4px] bg-[#18232d] pl-[4px] pr-[5px]">
          <div className="flex w-[908px] shrink-0 flex-col gap-[5px]">
            <ChartPanel />
            <div className="flex flex-1 gap-[4px] pb-[12px]">
              <OpenOrders />
              <OrderForm />
            </div>
          </div>
          <div className="flex w-[349px] shrink-0 flex-col gap-[5px]">
            <OrderBook />
            <TradeTape />
          </div>
          <div className="ml-[1px]">
            <CoinList />
          </div>
        </main>
      </div>
    </div>
  );
}
